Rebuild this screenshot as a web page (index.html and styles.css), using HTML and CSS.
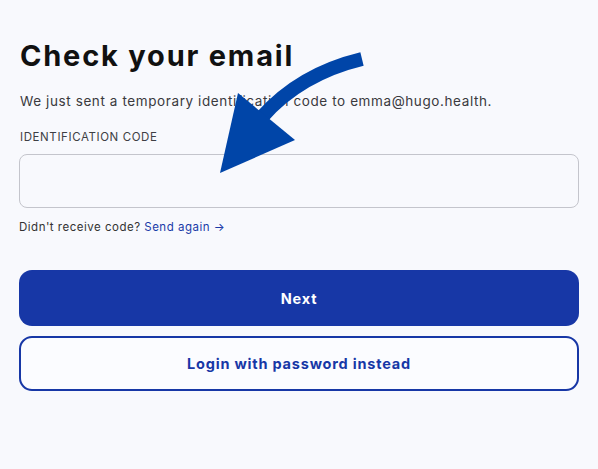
FILE: index.html
```html
<!DOCTYPE html>
<html>
<head>
<meta charset="utf-8">
<link rel="stylesheet" href="styles.css">
</head>
<body>
<main class="page">
  <h1 class="title">Check your email</h1>
  <p class="lead">We just sent a temporary identification code to emma@hugo.health.</p>
  <label class="label" for="code">IDENTIFICATION CODE</label>
  <input class="input" id="code" type="text">
  <p class="resend">Didn't receive code? <a class="link" href="#">Send again →</a></p>
  <div class="actions">
    <button class="btn btn-primary">Next</button>
    <button class="btn btn-outline">Login with password instead</button>
  </div>
  <svg class="arrow" width="598" height="469" viewBox="0 0 598 469">
    <path d="M362 59 Q300 74 262 117" fill="none" stroke="#0045a8" stroke-width="14"/>
    <polygon points="238,93 295,140 220,173" fill="#0045a8"/>
  </svg>
</main>
</body>
</html>
```

FILE: styles.css
```css
html, body {
  margin: 0;
  padding: 0;
  background: #f8f9fd;
}
body {
  font-family: Inter, "Noto Sans", sans-serif;
  width: 598px;
  height: 469px;
  overflow: hidden;
}
.page {
  position: relative;
  padding: 38px 19px 0 19px;
  display: flex;
  flex-direction: column;
}
.title {
  margin: 0 0 0 1px;
  font-size: 29px;
  font-weight: 700;
  color: #111;
  line-height: 36px;
  letter-spacing: 1.8px;
}
.lead {
  margin: 18px 0 0 1px;
  font-size: 13.5px;
  color: #3a3a3e;
  line-height: 18px;
  letter-spacing: 0.6px;
}
.label {
  margin: 19px 0 0 1px;
  font-size: 11.5px;
  color: #3e3f44;
  line-height: 16px;
  letter-spacing: 0.6px;
}
.input {
  margin-top: 9px;
  height: 54px;
  box-sizing: border-box;
  border: 1px solid #c4c5cc;
  border-radius: 8px;
  background: #f8f9fd;
  font: inherit;
}
.resend {
  margin: 11px 0 0 0;
  font-size: 11.5px;
  color: #333;
  line-height: 16px;
  letter-spacing: 0.5px;
}
.link {
  color: #1a3ba8;
  text-decoration: none;
}
.actions {
  margin-top: 35px;
  display: flex;
  flex-direction: column;
  gap: 10px;
}
.btn {
  height: 56px;
  border-radius: 13px;
  font-family: inherit;
  font-size: 14.5px;
  font-weight: 700;
  box-sizing: border-box;
  letter-spacing: 0.8px;
}
.btn-primary {
  background: #1737a6;
  color: #fff;
  border: none;
}
.btn-outline {
  height: 55px;
  background: #fbfcff;
  color: #1737a6;
  border: 2px solid #1737a6;
}
.arrow {
  position: absolute;
  left: 0;
  top: 0;
  pointer-events: none;
}
```
